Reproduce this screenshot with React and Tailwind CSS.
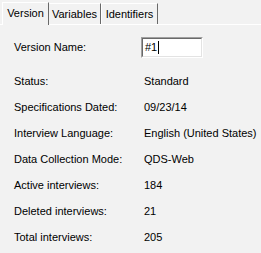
import React from 'react';

const rows = [
  ['Status:', 'Standard'],
  ['Specifications Dated:', '09/23/14'],
  ['Interview Language:', 'English (United States)'],
  ['Data Collection Mode:', 'QDS-Web'],
  ['Active interviews:', '184'],
  ['Deleted interviews:', '21'],
  ['Total interviews:', '205'],
];

const App = () => {
  return (
    <div
      className="w-[261px] h-[253px] bg-[#f2f2f2] text-black text-[11px] leading-[13px] overflow-hidden"
      style={{ fontFamily: '"Liberation Sans", Arial, sans-serif' }}
    >
      {/* Tabs */}
      <div className="flex items-end h-[25px] pl-[2px] border-b border-white">
        <div className="h-[23px] w-[47px] border-t border-l border-white border-r border-r-[#696969] bg-[#f2f2f2] flex items-center justify-center mb-[-1px] pb-[1px] relative z-10">
          Version
        </div>
        <div className="h-[21px] w-[52px] border-t border-white border-r border-r-[#696969] flex items-center justify-center">
          Variables
        </div>
        <div className="h-[21px] w-[57px] border-t border-l border-white border-r border-r-[#696969] flex items-center justify-center">
          Identifiers
        </div>
      </div>

      {/* Version name */}
      <div className="flex items-center pl-[14px] mt-[12px] h-[21px]">
        <div className="w-[127px]">Version Name:</div>
        <div className="w-[62px] h-[21px] border-t border-l border-[#a0a0a0] border-b border-r border-b-white border-r-white">
          <div className="h-full border-t border-l border-[#696969] border-b border-r border-b-[#e3e3e3] border-r-[#e3e3e3] bg-white flex items-center pl-[2px]">
            <span>#1</span>
            <span className="inline-block w-[1px] h-[13px] bg-black ml-[1px]"></span>
          </div>
        </div>
      </div>

      {/* Info rows */}
      <div className="flex flex-col pl-[14px] mt-[17px] gap-[13px]">
        {rows.map(([label, value]) => (
          <div key={label} className="flex h-[13px]">
            <div className="w-[130px]">{label}</div>
            <div>{value}</div>
          </div>
        ))}
      </div>
    </div>
  );
};

export default App;
